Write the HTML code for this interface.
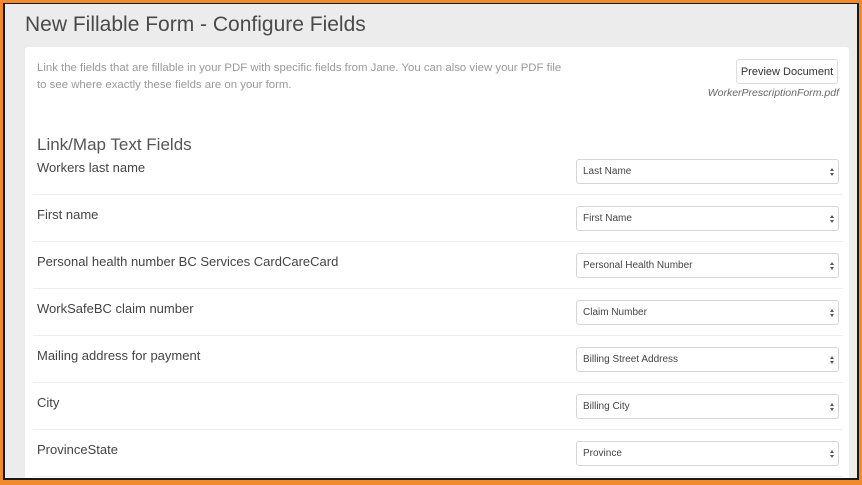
<!DOCTYPE html>
<html><head><style>
*{margin:0;padding:0;box-sizing:border-box}
body{width:862px;height:485px;overflow:hidden;background:#f08a2c;font-family:"Liberation Sans",sans-serif;position:relative}
.frame{position:absolute;left:3px;top:3px;right:3px;bottom:5px;background:#1a1a1a;padding:1px 2px 2px 2px}
.inner{width:100%;height:100%;background:#ececec;position:relative;overflow:hidden}
h1{position:absolute;left:20px;top:9px;font-size:21px;font-weight:normal;color:#4a4a4a}
.card{position:absolute;left:20px;top:43px;width:824px;height:460px;background:#fff;border-radius:3px}
.intro{position:absolute;left:12px;top:13px;font-size:11.4px;line-height:17px;color:#999;width:532px}
.btn{position:absolute;left:711px;top:12px;width:102px;height:25px;border:1px solid #ddd;border-radius:3px;font-size:11px;color:#333;display:flex;align-items:center;justify-content:center;white-space:nowrap}
.file{position:absolute;right:10px;top:40px;font-size:10.5px;font-style:italic;color:#666}
.sec{position:absolute;left:12px;top:88px;font-size:17px;color:#555}
.row{position:absolute;left:8px;width:810px;height:47px}
.row .l{position:absolute;left:4px;top:1px;font-size:13px;color:#444}
.row .d{position:absolute;left:0;top:35px;width:810px;border-top:1px solid #eee}
.sel{position:absolute;left:543px;top:0;width:263px;height:25px;border:1px solid #d6d6d6;border-radius:3px;font-size:10px;color:#444;display:flex;align-items:center;padding-left:6px}
.sel:after{content:"";position:absolute;right:4px;top:8px;width:0;height:0;border-left:2.5px solid transparent;border-right:2.5px solid transparent;border-bottom:3px solid #555}
.sel:before{content:"";position:absolute;right:4px;top:13px;width:0;height:0;border-left:2.5px solid transparent;border-right:2.5px solid transparent;border-top:3px solid #555}
</style></head><body>
<div class="frame"><div class="inner">
<h1>New Fillable Form - Configure Fields</h1>
<div class="card">
<div class="intro">Link the fields that are fillable in your PDF with specific fields from Jane. You can also view your PDF file<br>to see where exactly these fields are on your form.</div>
<div class="btn">Preview Document</div>
<div class="file">WorkerPrescriptionForm.pdf</div>
<div class="sec">Link/Map Text Fields</div>
<div class="row" style="top:112px"><span class="l">Workers last name</span><div class="sel">Last Name</div><div class="d"></div></div>
<div class="row" style="top:159px"><span class="l">First name</span><div class="sel">First Name</div><div class="d"></div></div>
<div class="row" style="top:206px"><span class="l">Personal health number BC Services CardCareCard</span><div class="sel">Personal Health Number</div><div class="d"></div></div>
<div class="row" style="top:253px"><span class="l">WorkSafeBC claim number</span><div class="sel">Claim Number</div><div class="d"></div></div>
<div class="row" style="top:300px"><span class="l">Mailing address for payment</span><div class="sel">Billing Street Address</div><div class="d"></div></div>
<div class="row" style="top:347px"><span class="l">City</span><div class="sel">Billing City</div><div class="d"></div></div>
<div class="row" style="top:394px"><span class="l">ProvinceState</span><div class="sel">Province</div><div class="d"></div></div>
</div>
</div></div>
</body></html>
